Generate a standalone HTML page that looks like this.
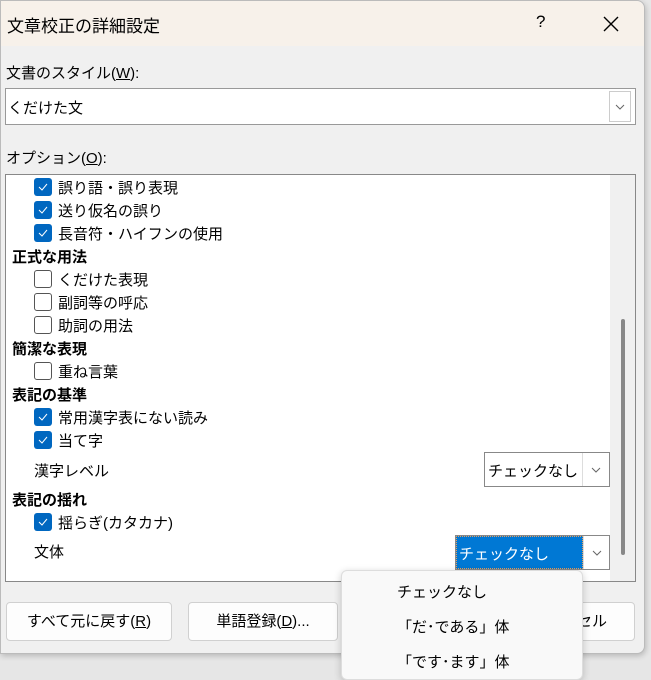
<!DOCTYPE html>
<html><head><meta charset="utf-8"><style>
*{box-sizing:border-box;margin:0;padding:0}
body{width:651px;height:675px;background:#e6e6e6;font-family:"Liberation Sans","Noto Sans CJK JP",sans-serif;font-size:15px;color:#000;position:relative;overflow:hidden}
.dlg{position:absolute;left:0;top:0;width:645px;height:654px;background:#f0f0f0;border:1px solid #bbb;border-radius:0 8px 8px 0;box-shadow:1px 2px 6px rgba(0,0,0,.2)}
.title{position:absolute;left:0;top:0;width:643px;height:45px;background:#f7f1ea;border-radius:0 8px 0 0}
.abs{position:absolute;white-space:nowrap}
.box{position:absolute;background:#fff;border:1px solid #999}
.arrow{position:absolute;background:#fff;border-left:1px solid #ddd;}
.arrow svg{position:absolute;left:50%;top:50%;margin:-3px 0 0 -5px}
.cb{position:absolute;left:33px;width:18px;height:18px;border-radius:3px}
.cb.on{background:#0067c0}
.cb.off{background:#fff;border:1px solid #555}
.cb svg{position:absolute;left:4px;top:5px}
.btn{position:absolute;top:601px;height:39px;background:#fdfdfd;border:1px solid #d0d0d0;border-radius:4px;text-align:center;line-height:37px}
b{font-weight:bold}
</style></head><body>
<div class="dlg">
<div class="title"></div>
<div class="abs" style="left:6px;top:11px;font-size:17px">文章校正の詳細設定</div>
<div class="abs" style="left:535px;top:11px;font-size:17px">?</div>
<svg class="abs" style="left:602px;top:15px" width="16" height="16"><path d="M1 1L15 15M15 1L1 15" stroke="#000" stroke-width="1.4"/></svg>
<div class="abs" style="left:5px;top:61px">文書のスタイル(<u>W</u>):</div>
<div class="box" style="left:4px;top:87px;width:631px;height:37px"><div class="abs" style="left:2px;top:8px">くだけた文</div>
<div class="arrow" style="left:603px;top:2px;width:22px;height:31px;border:1px solid #ccc"><svg width="10" height="6"><path d="M1 1L5 5L9 1" stroke="#666" fill="none"/></svg></div></div>
<div class="abs" style="left:5px;top:146px">オプション(<u>O</u>):</div>
<div class="box" style="left:4px;top:173px;width:631px;height:408px;border-color:#888">
<div style="position:absolute;left:604px;top:0;width:25px;height:406px;background:#f0f0f0"></div>
<div style="position:absolute;left:615px;top:144px;width:4px;height:236px;background:#888;border-radius:2px"></div>
</div>
<div class="cb on" style="top:177px"><svg width="10" height="8"><path d="M1 4L4 7L9 1" stroke="#fff" fill="none"/></svg></div>
<div class="abs" style="left:57px;top:176px">誤り語・誤り表現</div>
<div class="cb on" style="top:200px"><svg width="10" height="8"><path d="M1 4L4 7L9 1" stroke="#fff" fill="none"/></svg></div>
<div class="abs" style="left:57px;top:199px">送り仮名の誤り</div>
<div class="cb on" style="top:223px"><svg width="10" height="8"><path d="M1 4L4 7L9 1" stroke="#fff" fill="none"/></svg></div>
<div class="abs" style="left:57px;top:222px">長音符・ハイフンの使用</div>
<div class="abs" style="left:11px;top:245px"><b>正式な用法</b></div>
<div class="cb off" style="top:269px"></div><div class="abs" style="left:57px;top:268px">くだけた表現</div>
<div class="cb off" style="top:292px"></div><div class="abs" style="left:57px;top:291px">副詞等の呼応</div>
<div class="cb off" style="top:315px"></div><div class="abs" style="left:57px;top:314px">助詞の用法</div>
<div class="abs" style="left:11px;top:337px"><b>簡潔な表現</b></div>
<div class="cb off" style="top:361px"></div><div class="abs" style="left:57px;top:360px">重ね言葉</div>
<div class="abs" style="left:11px;top:383px"><b>表記の基準</b></div>
<div class="cb on" style="top:407px"><svg width="10" height="8"><path d="M1 4L4 7L9 1" stroke="#fff" fill="none"/></svg></div>
<div class="abs" style="left:57px;top:406px">常用漢字表にない読み</div>
<div class="cb on" style="top:430px"><svg width="10" height="8"><path d="M1 4L4 7L9 1" stroke="#fff" fill="none"/></svg></div>
<div class="abs" style="left:57px;top:429px">当て字</div>
<div class="abs" style="left:33px;top:459px">漢字レベル</div>
<div class="box" style="left:483px;top:451px;width:126px;height:35px;border-color:#888"><div class="abs" style="left:3px;top:7px">チェックなし</div>
<div class="arrow" style="left:97px;top:0;width:27px;height:33px"><svg width="10" height="6"><path d="M1 1L5 5L9 1" stroke="#666" fill="none"/></svg></div></div>
<div class="abs" style="left:11px;top:488px"><b>表記の揺れ</b></div>
<div class="cb on" style="top:512px"><svg width="10" height="8"><path d="M1 4L4 7L9 1" stroke="#fff" fill="none"/></svg></div>
<div class="abs" style="left:57px;top:511px">揺らぎ(カタカナ)</div>
<div class="abs" style="left:33px;top:540px">文体</div>
<div class="box" style="left:454px;top:534px;width:155px;height:35px;border-color:#888"><div style="position:absolute;left:0;top:0;width:127px;height:33px;background:#0078d4;border:1px dotted #e8a060"></div><div class="abs" style="left:3px;top:7px;color:#fff">チェックなし</div>
<div class="arrow" style="left:127px;top:0;width:26px;height:33px"><svg width="10" height="6"><path d="M1 1L5 5L9 1" stroke="#666" fill="none"/></svg></div></div>
<div class="btn" style="left:5px;width:166px">すべて元に戻す(<u>R</u>)</div>
<div class="btn" style="left:187px;width:150px">単語登録(<u>D</u>)...</div>
<div class="btn" style="left:520px;width:114px;text-align:right;padding-right:27px">セル</div>
</div>
<div style="position:absolute;left:341px;top:570px;width:242px;height:110px;background:#f9f9f9;border:1px solid #ddd;border-radius:6px;box-shadow:0 2px 8px rgba(0,0,0,.2)">
<div class="abs" style="left:55px;top:10px">チェックなし</div>
<div class="abs" style="left:55px;top:45px">「だ･である」体</div>
<div class="abs" style="left:55px;top:80px">「です･ます」体</div>
</div>
</body></html>
